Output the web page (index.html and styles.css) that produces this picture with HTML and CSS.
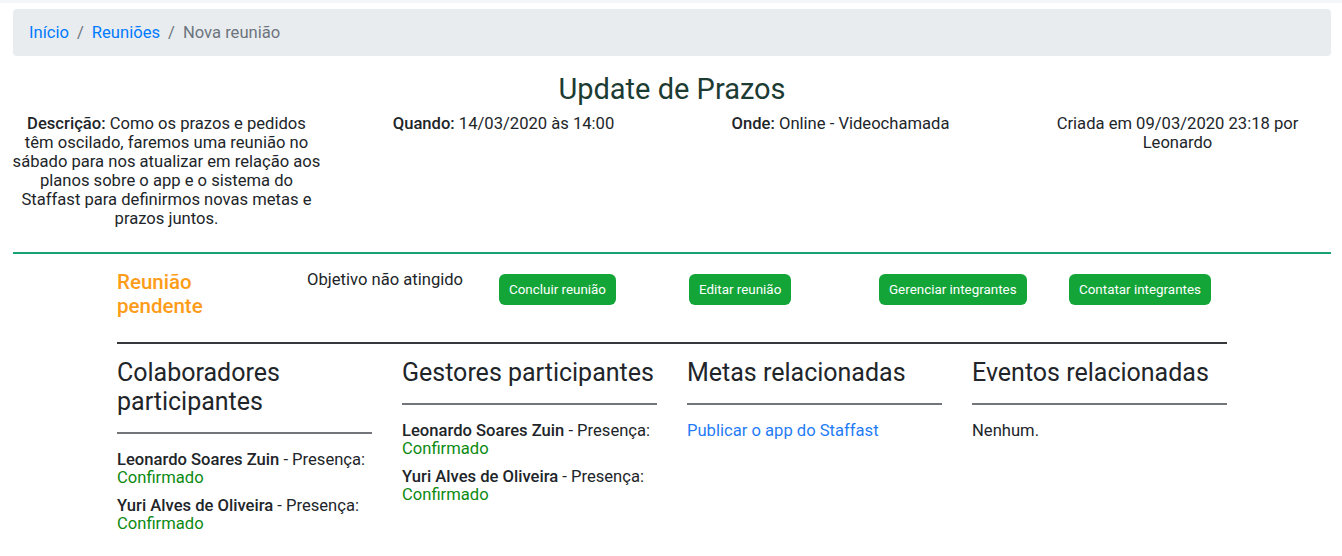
FILE: index.html
```html
<!DOCTYPE html>
<html lang="pt-BR">
<head>
<meta charset="utf-8">
<title>Nova reunião</title>
<link rel="stylesheet" href="styles.css">
</head>
<body>
<div class="topstrip"></div>
<div class="page">
  <nav class="breadcrumb">
    <a href="#" class="crumb-link">Início</a>
    <span class="sep">/</span>
    <a href="#" class="crumb-link">Reuniões</a>
    <span class="sep">/</span>
    <span class="crumb-active">Nova reunião</span>
  </nav>

  <h3 class="title">Update de Prazos</h3>

  <div class="info-row">
    <div class="info-col"><b>Descrição:</b> Como os prazos e pedidos<br>têm oscilado, faremos uma reunião no<br>sábado para nos atualizar em relação aos<br>planos sobre o app e o sistema do<br>Staffast para definirmos novas metas e<br>prazos juntos.</div>
    <div class="info-col"><b>Quando:</b> 14/03/2020 às 14:00</div>
    <div class="info-col"><b>Onde:</b> Online - Videochamada</div>
    <div class="info-col">Criada em 09/03/2020 23:18 por Leonardo</div>
  </div>

  <hr class="green-hr">

  <div class="container">
    <div class="status-row">
      <div class="scol"><div class="pending">Reunião pendente</div></div>
      <div class="scol"><div class="objective">Objetivo não atingido</div></div>
      <div class="scol"><button class="btn">Concluir reunião</button></div>
      <div class="scol"><button class="btn">Editar reunião</button></div>
      <div class="scol"><button class="btn">Gerenciar integrantes</button></div>
      <div class="scol"><button class="btn">Contatar integrantes</button></div>
    </div>

    <hr class="dark-hr">

    <div class="sections">
      <div class="sec">
        <h4 class="sec-title">Colaboradores participantes</h4>
        <hr class="gray-hr">
        <div class="entry"><b>Leonardo Soares Zuin</b> - Presença: <span class="ok">Confirmado</span></div>
        <div class="entry"><b>Yuri Alves de Oliveira</b> - Presença: <span class="ok">Confirmado</span></div>
      </div>
      <div class="sec">
        <h4 class="sec-title">Gestores participantes</h4>
        <hr class="gray-hr">
        <div class="entry"><b>Leonardo Soares Zuin</b> - Presença: <span class="ok">Confirmado</span></div>
        <div class="entry"><b>Yuri Alves de Oliveira</b> - Presença: <span class="ok">Confirmado</span></div>
      </div>
      <div class="sec">
        <h4 class="sec-title">Metas relacionadas</h4>
        <hr class="gray-hr">
        <div class="entry"><a href="#" class="link">Publicar o app do Staffast</a></div>
      </div>
      <div class="sec">
        <h4 class="sec-title">Eventos relacionadas</h4>
        <hr class="gray-hr">
        <div class="entry">Nenhum.</div>
      </div>
    </div>
  </div>
</div>
</body>
</html>
```

FILE: styles.css
```css
* { box-sizing: border-box; }
html, body { margin: 0; padding: 0; }
body {
  font-family: Roboto, "Liberation Sans", sans-serif;
  font-size: 16.6px;
  color: #212529;
  background: #fff;
}
b { font-weight: 500; }
.topstrip { height: 3px; background: #f5f6f8; }
.page { padding: 6px 11px 0 13px; }

.breadcrumb {
  display: flex;
  align-items: center;
  background: #e9ecef;
  border-radius: 4px;
  padding: 12px 16px;
  line-height: 23px;
  margin-bottom: 16px;
}
.crumb-link { color: #007bff; text-decoration: none; }
.sep { color: #6c757d; padding: 0 8px; }
.crumb-active { color: #6c757d; }

.title {
  margin: 0 0 8px;
  text-align: center;
  font-size: 29px;
  font-weight: 400;
  line-height: 34px;
  color: #1c3b32;
}

.info-row {
  display: grid;
  grid-template-columns: repeat(4, 1fr);
  margin: 0 -15px;
}
.info-col {
  padding: 0 12px;
  text-align: center;
  line-height: 19px;
  margin-bottom: 8px;
}

.green-hr {
  border: 0;
  height: 2px;
  background: #18a174;
  margin: 16px 0;
}

.container { width: 1110px; margin: 0 auto; }

.status-row {
  display: grid;
  grid-template-columns: repeat(6, 1fr);
  margin: 0 -15px;
}
.scol { padding: 0 15px; }
.pending {
  color: #fd9c18;
  font-size: 20.5px;
  font-weight: 500;
  line-height: 24px;
  max-width: 160px;
}
.objective { line-height: 19px; }
.btn {
  margin: 4px 0 0 2px;
  font-family: inherit;
  font-size: 13.4px;
  line-height: 19px;
  padding: 6px 10px;
  color: #fff;
  background: #13a538;
  border: 0;
  border-radius: 6px;
  cursor: pointer;
}

.dark-hr {
  border: 0;
  height: 2px;
  background: #35393d;
  margin: 24px 0 14px;
}

.sections {
  display: grid;
  grid-template-columns: repeat(4, 1fr);
  margin: 0 -15px;
}
.sec { padding: 0 15px; }
.sec-title {
  margin: 0;
  font-size: 25px;
  font-weight: 400;
  line-height: 29px;
}
.gray-hr {
  border: 0;
  height: 2px;
  background: #727579;
  margin: 16px 0 17px;
}
.entry { line-height: 18px; margin-bottom: 10px; }
.ok { color: #0b8a12; }
.link { color: #1f7cf5; text-decoration: none; }
```
